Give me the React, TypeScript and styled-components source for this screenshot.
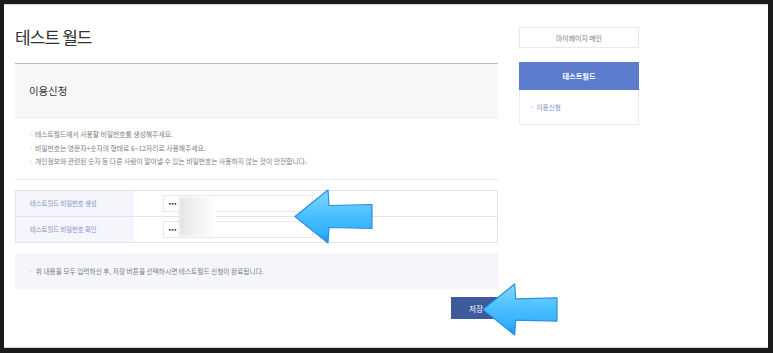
import React from "react";
import styled, { createGlobalStyle } from "styled-components";

const Global = createGlobalStyle`
  html, body { margin: 0; padding: 0; background: #1b1b1b; }
  body { font-family: "Noto Sans CJK KR", "Noto Sans", sans-serif; }
  * { box-sizing: border-box; }
`;

const Root = styled.div`
  position: relative;
  width: 773px;
  height: 353px;
  padding: 4px 0 0 4px;
`;

const Frame = styled.div`
  width: 764px;
  height: 344px;
  background: #fff;
  border-top: 1px solid #d6d6d6;
  border-bottom: 1px solid #d6d6d6;
  padding-left: 11px;
  display: flex;
  gap: 21px;
`;

const Main = styled.div`
  width: 483px;
  display: flex;
  flex-direction: column;
`;

const Title = styled.h1`
  margin: 22px 0 0;
  height: 20px;
  line-height: 20px;
  font-size: 17px;
  font-weight: 400;
  letter-spacing: -0.9px;
  color: #333;
`;

const SectionHead = styled.div`
  margin-top: 16px;
  height: 55px;
  border-top: 1px solid #bcbcbc;
  border-bottom: 1px solid #ececec;
  background: #f8f8f8;
  display: flex;
  align-items: center;
  padding-left: 14px;
  font-size: 10.5px;
  letter-spacing: -0.1px;
  color: #333;
`;

const Guide = styled.ul`
  list-style: none;
  margin: 0;
  padding: 10px 0 10.5px;
  border-bottom: 1px solid #ececec;
`;

const GuideItem = styled.li`
  position: relative;
  padding-left: 20px;
  height: 13.5px;
  line-height: 13.5px;
  font-size: 6.8px;
  color: #7e7e7e;
  white-space: nowrap;
  &::before {
    content: "·";
    position: absolute;
    left: 14px;
    color: #aaa;
  }
`;

const Table = styled.div`
  margin-top: 10px;
  border: 1px solid #dfe4ef;
  display: grid;
  grid-template-columns: 118px 1fr;
  position: relative;
`;

const LabelCell = styled.div<{ $last?: boolean }>`
  height: ${(p) => (p.$last ? "25px" : "26px")};
  background: #f4f6fb;
  border-bottom: ${(p) => (p.$last ? "none" : "1px solid #dfe4ef")};
  display: flex;
  align-items: center;
  padding-left: 14px;
  font-size: 6.3px;
  color: #7f93c4;
  white-space: nowrap;
`;

const ValueCell = styled.div<{ $last?: boolean }>`
  height: ${(p) => (p.$last ? "25px" : "26px")};
  border-bottom: ${(p) => (p.$last ? "none" : "1px solid #dfe4ef")};
  display: flex;
  align-items: center;
  padding-left: 29px;
`;

const PwInput = styled.div`
  width: 150px;
  height: 17px;
  border: 1px solid #e8e8e8;
  background: #fff;
  display: flex;
  align-items: center;
  padding-left: 4px;
  font-family: "DejaVu Sans", sans-serif;
  font-size: 6px;
  letter-spacing: -0.8px;
  color: #222;
`;

const Redact = styled.div`
  position: absolute;
  left: 163px;
  top: 6px;
  width: 37px;
  height: 39px;
  background: linear-gradient(90deg, #e4e4e4 0%, #f1f1f1 45%, #ffffff 100%);
  filter: blur(0.8px);
`;

const Note = styled.div`
  margin-top: 10px;
  height: 36px;
  background: #f5f6fa;
  display: flex;
  align-items: center;
  padding-left: 13px;
  font-size: 6.7px;
  color: #7e7e7e;
  white-space: nowrap;
  &::before {
    content: "·";
    margin-right: 4px;
    color: #aaa;
  }
`;

const Actions = styled.div`
  display: flex;
  justify-content: flex-end;
  margin-top: 8px;
`;

const SaveButton = styled.button`
  width: 47px;
  height: 22px;
  border: none;
  background: #3f5a9a;
  color: #fff;
  font-family: inherit;
  font-size: 7.6px;
  padding: 0 0 0 3px;
`;

const Side = styled.aside`
  width: 120px;
  margin-top: 22px;
  display: flex;
  flex-direction: column;
`;

const MyPage = styled.div`
  height: 21px;
  border: 1px solid #e8e8e8;
  display: flex;
  align-items: center;
  justify-content: center;
  font-size: 6.9px;
  color: #7e7e7e;
`;

const SideHead = styled.div`
  margin-top: 14px;
  height: 28px;
  background: #5c7cce;
  display: flex;
  align-items: center;
  justify-content: center;
  color: #fff;
  font-size: 7.2px;
  font-weight: 700;
`;

const SideList = styled.div`
  height: 35px;
  border: 1px solid #ececf4;
  border-top: none;
  display: flex;
  align-items: center;
  gap: 3px;
  padding-left: 11px;
  font-size: 6.6px;
  color: #7b92cc;
`;

const Dash = styled.span`
  font-family: "DejaVu Sans", sans-serif;
  font-size: 7px;
`;

const ArrowSvg = styled.svg<{ $x: number; $y: number }>`
  position: absolute;
  left: ${(p) => p.$x}px;
  top: ${(p) => p.$y}px;
  overflow: visible;
`;

function Arrow({ x, y, w, h, id }: { x: number; y: number; w: number; h: number; id: string }) {
  const mid = h / 2;
  const headX = w * 0.43;
  const shaftTop = mid - h * 0.2;
  const shaftBot = mid + h * 0.2;
  const d = `M1 ${mid} L${headX} 1 L${headX + 1} ${shaftTop} L${w - 1} ${shaftTop - 1} L${w - 1} ${shaftBot + 1} L${headX + 1} ${shaftBot} L${headX} ${h - 1} Z`;
  return (
    <ArrowSvg $x={x} $y={y} width={w} height={h} viewBox={`0 0 ${w} ${h}`}>
      <defs>
        <linearGradient id={id} x1="0" y1="0" x2="0" y2="1">
          <stop offset="0" stopColor="#86d8ff" />
          <stop offset="0.45" stopColor="#4cc0ff" />
          <stop offset="0.8" stopColor="#35b0fb" />
          <stop offset="1" stopColor="#1f8fe6" />
        </linearGradient>
      </defs>
      <path d={d} fill={`url(#${id})`} stroke="#2a8fe6" strokeWidth="1.2" strokeLinejoin="round" />
    </ArrowSvg>
  );
}

export default function App() {
  return (
    <Root>
      <Global />
      <Frame>
        <Main>
          <Title>테스트 월드</Title>
          <SectionHead>이용신청</SectionHead>
          <Guide>
            <GuideItem>테스트월드에서 사용할 비밀번호를 생성해주세요.</GuideItem>
            <GuideItem>비밀번호는 영문자+숫자의 형태로 6~12자리로 사용해주세요.</GuideItem>
            <GuideItem>개인정보와 관련된 숫자 등 다른 사람이 알아낼 수 있는 비밀번호는 사용하지 않는 것이 안전합니다.</GuideItem>
          </Guide>
          <Table>
            <LabelCell>테스트월드 비밀번호 생성</LabelCell>
            <ValueCell>
              <PwInput>•••</PwInput>
            </ValueCell>
            <LabelCell $last>테스트월드 비밀번호 확인</LabelCell>
            <ValueCell $last>
              <PwInput>•••</PwInput>
            </ValueCell>
            <Redact />
          </Table>
          <Note>위 내용을 모두 입력하신 후, 저장 버튼을 선택하시면 테스트월드 신청이 완료됩니다.</Note>
          <Actions>
            <SaveButton>저장</SaveButton>
          </Actions>
        </Main>
        <Side>
          <MyPage>마이페이지 메인</MyPage>
          <SideHead>테스트월드</SideHead>
          <SideList>
            <Dash>-</Dash>
            <span>이용신청</span>
          </SideList>
        </Side>
      </Frame>
      <Arrow id="a1" x={294} y={189} w={79} h={55} />
      <Arrow id="a2" x={482} y={283} w={76} h={53} />
    </Root>
  );
}
